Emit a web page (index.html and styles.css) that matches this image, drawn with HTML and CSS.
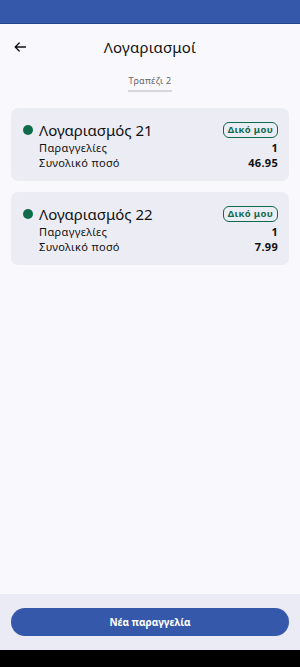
FILE: index.html
```html
<!DOCTYPE html>
<html lang="el">
<head>
<meta charset="utf-8">
<link rel="stylesheet" href="styles.css">
</head>
<body>
<div class="screen">
  <div class="statusbar"></div>
  <header class="header">
    <span class="back">
      <svg width="12" height="10" viewBox="0 0 12 10"><path d="M11.5 5H1.2M5.2 1L1.2 5l4 4" fill="none" stroke="#111" stroke-width="1.3" stroke-linecap="round" stroke-linejoin="round"/></svg>
    </span>
    <h1 class="title">Λογαριασμοί</h1>
  </header>
  <div class="tabs"><span class="tab">Τραπέζι 2</span></div>
  <main class="list">
    <section class="card">
      <div class="card-head">
        <span class="dot"></span>
        <span class="name">Λογαριασμός 21</span>
        <span class="badge">Δικό μου</span>
      </div>
      <div class="row"><span>Παραγγελίες</span><b>1</b></div>
      <div class="row"><span>Συνολικό ποσό</span><b>46.95</b></div>
    </section>
    <section class="card">
      <div class="card-head">
        <span class="dot"></span>
        <span class="name">Λογαριασμός 22</span>
        <span class="badge">Δικό μου</span>
      </div>
      <div class="row"><span>Παραγγελίες</span><b>1</b></div>
      <div class="row"><span>Συνολικό ποσό</span><b>7.99</b></div>
    </section>
  </main>
  <footer class="footer"><button class="btn">Νέα παραγγελία</button></footer>
  <div class="navbar"></div>
</div>
</body>
</html>
```
FILE: styles.css
```css
* { box-sizing: border-box; }
html, body { margin: 0; padding: 0; }
body { font-family: "Noto Sans", "DejaVu Sans", sans-serif; background: #000; color: #111; }
.screen { width: 300px; height: 667px; display: flex; flex-direction: column; background: #f9f9fd; }
.statusbar { height: 24px; background: #3558ab; border-bottom: 1px solid #244690; flex: none; }
.header { height: 46px; display: flex; align-items: center; justify-content: center; position: relative; }
.back { position: absolute; left: 14px; top: 18px; display: flex; }
.title { margin: 0; font-size: 15px; font-weight: 400; letter-spacing: 0.2px; }
.tabs { display: flex; justify-content: center; padding-top: 5px; }
.tab { font-size: 9px; line-height: 12px; letter-spacing: 0.3px; color: #666; padding: 0 1px 3px; border-bottom: 2px solid #d6d6dc; min-width: 42px; text-align: center; }
.list { flex: 1; display: flex; flex-direction: column; gap: 11px; padding: 16px 11px 0; }
.card { background: #ececf5; border-radius: 7px; padding: 12px 11px 10px 12px; height: 73px; }
.card-head { display: flex; align-items: center; height: 20px; }
.dot { width: 10px; height: 10px; border-radius: 50%; background: #0e6b4c; margin-right: 6px; }
.name { font-size: 15px; flex: 1; }
.badge { font-size: 9.5px; font-weight: 700; letter-spacing: 0.3px; color: #0e6b4c; border: 1px solid #0e6b4c; border-radius: 6px; padding: 1px 4px; line-height: 12px; }
.row { display: flex; justify-content: space-between; font-size: 11px; letter-spacing: 0.35px; line-height: 15px; padding-left: 16px; }
.row b { font-weight: 700; letter-spacing: 0.3px; }
.footer { height: 56px; background: #ebebf5; display: flex; align-items: center; padding: 0 11px; flex: none; }
.btn { width: 100%; height: 28px; border: none; border-radius: 14px; background: #3558ab; color: #fff; font-family: inherit; font-size: 10px; font-weight: 700; }
.navbar { height: 17px; background: #000; flex: none; }
```
